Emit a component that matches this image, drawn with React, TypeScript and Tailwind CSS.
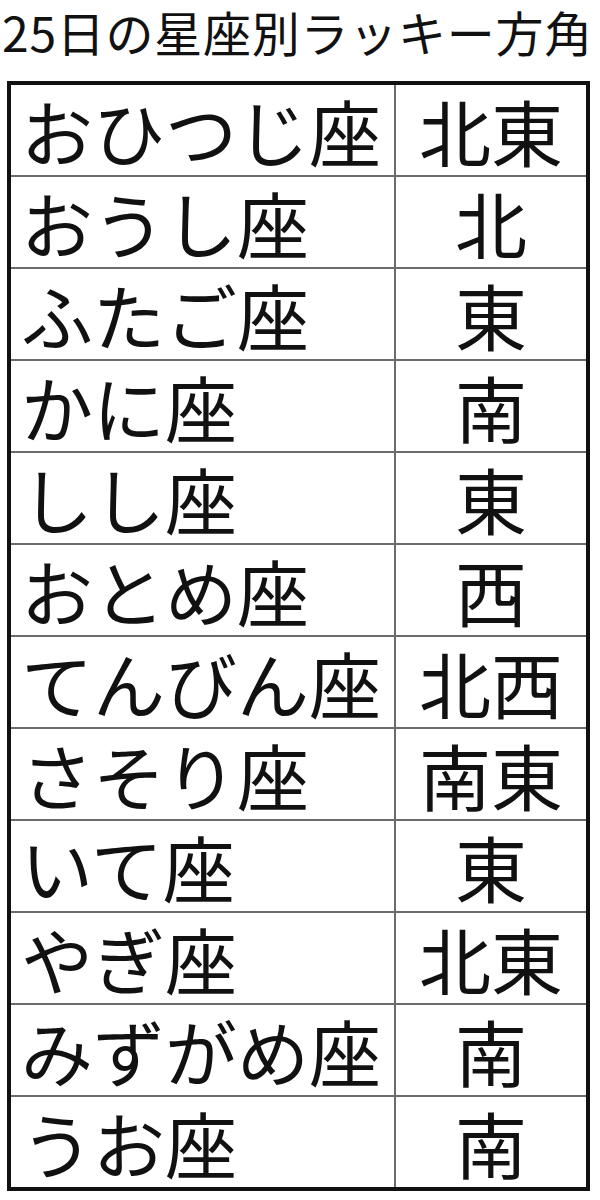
import React from 'react';

const rows: [string, string][] = [
    ['おひつじ座', '北東'],
    ['おうし座', '北'],
    ['ふたご座', '東'],
    ['かに座', '南'],
    ['しし座', '東'],
    ['おとめ座', '西'],
    ['てんびん座', '北西'],
    ['さそり座', '南東'],
    ['いて座', '東'],
    ['やぎ座', '北東'],
    ['みずがめ座', '南'],
    ['うお座', '南'],
];

export default function App() {
    return (
        <div className="w-[600px] min-h-[1200px] bg-white text-[#111] font-['Noto_Sans_CJK_JP','Noto_Sans',sans-serif]">
            {/* Title */}
            <h1 className="pl-[2px] pt-[3px] text-[48px] leading-[56px] tracking-[0.75px] font-normal whitespace-nowrap">
                25日の星座別ラッキー方角
            </h1>

            {/* Table */}
            <div className="mt-[22px] ml-[7px] w-[583px] border-4 border-[#111]">
                {rows.map(([sign, dir], i) => (
                    <div
                        key={sign}
                        className={`grid grid-cols-[383px_1fr] ${i > 0 ? 'border-t-2 border-[#6b6b6b] h-[92px]' : 'h-[90px]'}`}
                    >
                        <div className="flex items-center pl-[10px] text-[72px] leading-[88px] whitespace-nowrap">
                            {sign}
                        </div>
                        <div className="flex items-center justify-center border-l-2 border-[#6b6b6b] text-[72px] leading-[88px] whitespace-nowrap">
                            {dir}
                        </div>
                    </div>
                ))}
            </div>
        </div>
    );
}
